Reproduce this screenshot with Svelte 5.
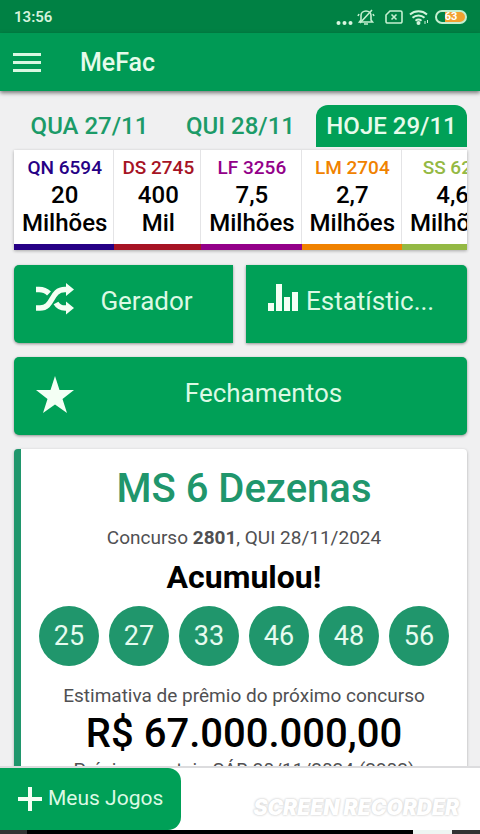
<script lang="ts">
	type Prize = { code: string; contest: string; amount: string; unit: string; color: string };

	const days = ['QUA 27/11', 'QUI 28/11', 'HOJE 29/11'];
	let selected = $state('HOJE 29/11');

	const prizes: Prize[] = [
		{ code: 'QN', contest: '6594', amount: '20', unit: 'Milhões', color: '#260085' },
		{ code: 'DS', contest: '2745', amount: '400', unit: 'Mil', color: '#a61324' },
		{ code: 'LF', contest: '3256', amount: '7,5', unit: 'Milhões', color: '#930089' },
		{ code: 'LM', contest: '2704', amount: '2,7', unit: 'Milhões', color: '#f08200' },
		{ code: 'SS', contest: '622', amount: '4,6', unit: 'Milhões', color: '#94b944' }
	];

	const numbers = [25, 27, 33, 46, 48, 56];
</script>

<div class="screen">
	<div class="status">
		<span>13:56</span>
		<div class="status-icons">
			<svg width="17" height="16" viewBox="0 0 17 16" fill="#d8f5df">
				<circle cx="2.5" cy="12" r="2" />
				<circle cx="8.5" cy="12" r="2" />
				<circle cx="14.5" cy="12" r="2" />
			</svg>
			<svg class="bell" width="18" height="16" viewBox="0 0 18 16" fill="none" stroke="#c4efd0" stroke-width="1.6">
				<path d="M4 11V6.500C4 4 6 2 9 2s5 2 5 4.500V11l1.500 2h-13L4 11z" />
				<path d="M7 15h4M2 5l-1 2M16 5l1 2M3 14L15 1" />
			</svg>
			<svg class="sim" width="18" height="16" viewBox="0 0 18 16" fill="none" stroke="#c4efd0" stroke-width="1.6">
				<path d="M5 2h10.500a1.500 1.500 0 0 1 1.500 1.500v9a1.500 1.500 0 0 1-1.500 1.500h-13A1.500 1.500 0 0 1 1 12.500V6z" />
				<path d="M6.500 5.500l5 5M11.500 5.500l-5 5" />
			</svg>
			<svg class="wifi" width="20" height="16" viewBox="0 0 20 16" fill="none" stroke="#d2f5dc" stroke-width="2">
				<path d="M1 5.500a13 13 0 0 1 17 0M3.500 8.700a9 9 0 0 1 12 0M6.500 11.700a5 5 0 0 1 6 0" />
				<circle cx="9.500" cy="14" r="1" fill="#d2f5dc" />
				<path d="M16 12v3M18.500 11v3" stroke-width="1" />
			</svg>
			<span class="battery">63</span>
		</div>
	</div>

	<header class="appbar">
		<button class="menu" aria-label="Menu">
			<svg width="28" height="20" viewBox="0 0 28 20" fill="#d9f8e2">
				<path d="M0 0h28v3H0zM0 8h28v3H0zM0 16h28v3H0z" />
			</svg>
		</button>
		<h1>MeFac</h1>
	</header>

	<main>
		<div class="tabs" role="tablist">
			{#each days as day}
				<button role="tab" aria-selected={selected === day} class:active={selected === day} onclick={() => (selected = day)}>
					{day}
				</button>
			{/each}
		</div>

		<div class="prizes">
			{#each prizes as p}
				<div class="prize" style:--color={p.color}>
					<span class="prize-name">{p.code} {p.contest}</span>
					<span>{p.amount}</span>
					<span>{p.unit}</span>
				</div>
			{/each}
		</div>

		<div class="actions">
			<button class="action left">
				<svg width="38" height="32" viewBox="0 0 38 32" fill="none" stroke="#f4fff4" stroke-width="5.500">
					<path d="M0 6.500h3c4 0 7 1 10 4M0 25h4c14 0 10-18.500 25-18.500h3M20 20c2 3.500 5 5 9 5h3" />
					<path d="M30 0l8 6.500-8 6.500zM30 18.500l8 6.500-8 6.500z" fill="#f4fff4" stroke="none" />
				</svg>
				<span>Gerador</span>
			</button>
			<button class="action right">
				<svg width="30" height="32" viewBox="0 0 30 32" fill="#f4fff4">
					<path d="M0 20h6v8H0zM8 1h6v27H8zM16 14h6v14h-6zM24 9h6v19h-6z" />
				</svg>
				<span>Estatístic...</span>
			</button>
			<button class="action wide">
				<svg class="star" width="38" height="38" viewBox="0 0 38 38" fill="#f4fff4">
					<path d="M19 0l4.500 14H38L26.500 23 31 37l-12-8.500L7 37l4.500-14L0 14h14.500z" />
				</svg>
				<span>Fechamentos</span>
			</button>
		</div>

		<section class="card">
			<h2>MS 6 Dezenas</h2>
			<p>Concurso <b>2801</b>, QUI 28/11/2024</p>
			<p class="result">Acumulou!</p>
			<div class="balls">
				{#each numbers as n}
					<span class="ball">{n}</span>
				{/each}
			</div>
			<p>Estimativa de prêmio do próximo concurso</p>
			<p class="money">R$ 67.000.000,00</p>
			<p>Próximo sorteio SÁB 30/11/2024 (2802)</p>
		</section>
	</main>

	<footer>
		<button class="games">
			<svg width="24" height="24" viewBox="0 0 24 24" fill="#f4fff4">
				<path d="M10 0h4v10h10v4H14v10h-4V14H0v-4h10z" />
			</svg>
			<span>Meus Jogos</span>
		</button>
		<span class="watermark">SCREEN RECORDER</span>
	</footer>
	<div class="strip"><i></i><i class="thumb"></i><i></i></div>
</div>

<style>
	:global(body) {
		margin: 0;
	}

	.screen {
		display: flex;
		flex-direction: column;
		height: 100vh;
		overflow: hidden;
		background: #f0f0f1;
		font-family: Roboto, sans-serif;
		color: #000;
	}

	button {
		border: none;
		padding: 0;
		background: none;
		font: inherit;
		color: inherit;
		cursor: pointer;
	}

	h1,
	h2,
	p {
		margin: 0;
	}

	svg {
		flex: none;
	}

	.status {
		display: flex;
		flex: none;
		align-items: center;
		justify-content: space-between;
		height: 33px;
		padding: 0 13px 0 14px;
		background: #008144;
		color: #d5f3dc;
		font-size: 15px;
		font-weight: 600;
	}

	.status-icons {
		display: flex;
		align-items: center;
	}

	.status-icons svg:first-child {
		padding-top: 5px;
	}

	.bell {
		margin-left: 4px;
	}

	.sim {
		margin-left: 10px;
	}

	.wifi {
		margin: 0 6px;
	}

	.battery {
		box-sizing: border-box;
		width: 32px;
		height: 14px;
		border: 2px solid #c4efd0;
		border-radius: 7px;
		background: linear-gradient(90deg, #008144 8px, #f2a130 8px);
		color: #fff;
		font-size: 11px;
		font-weight: 700;
		line-height: 10px;
		text-align: center;
	}

	.appbar {
		display: flex;
		flex: none;
		align-items: center;
		gap: 39px;
		height: 58px;
		padding: 0 13px;
		background: #009a55;
		box-shadow: 0 2px 4px rgba(0, 0, 0, 0.5);
		color: #e6fbeb;
	}

	.menu {
		display: flex;
		padding-top: 2px;
	}

	h1 {
		font-size: 25px;
		font-weight: 500;
	}

	main {
		flex: 1;
		min-height: 0;
		overflow: hidden;
		padding: 14px 13px 0 14px;
	}

	.tabs {
		display: grid;
		grid-template-columns: repeat(3, 1fr);
	}

	.tabs button {
		height: 42px;
		border-radius: 12px 12px 0 0;
		color: #1c9b68;
		font-size: 24px;
		font-weight: 500;
		white-space: nowrap;
	}

	.tabs .active {
		background: #00a057;
		color: #e6fbeb;
	}

	.prizes {
		display: flex;
		overflow: hidden;
		margin-top: 3px;
		background: #fff;
		box-shadow: 0 1px 3px rgba(0, 0, 0, 0.3);
	}

	.prize {
		display: flex;
		flex: none;
		flex-direction: column;
		align-items: center;
		padding: 5px 7px 7px 8px;
		border-bottom: 6px solid var(--color);
		box-shadow: inset -1px 0 #e4e4e6;
		font-size: 24px;
		font-weight: 500;
		line-height: 28px;
	}

	.prize-name {
		color: var(--color);
		font-size: 19px;
		line-height: 26px;
	}

	.actions {
		display: grid;
		grid-template-columns: 219fr 221fr;
		gap: 14px 13px;
		margin: 15px 0 14px;
	}

	.action {
		display: flex;
		align-items: center;
		gap: 8px;
		min-width: 0;
		height: 78px;
		padding: 0 22px 6px;
		border-radius: 5px;
		background: #00a057;
		box-shadow: 0 1px 3px rgba(0, 0, 0, 0.4);
		color: #dcf9e4;
		font-size: 26px;
	}

	.action span {
		flex: 1;
		white-space: nowrap;
	}

	.action svg {
		margin-bottom: 4px;
	}

	.action .star {
		margin: 4px 0 0;
	}

	.left {
		border-radius: 5px 0 0 5px;
	}

	.right {
		border-radius: 0 5px 5px 0;
		text-align: left;
	}

	.wide {
		grid-column: 1 / -1;
	}

	.card {
		padding: 16px 12px;
		border-left: 7px solid #20966c;
		border-radius: 4px;
		background: #fff;
		box-shadow: 0 1px 3px rgba(0, 0, 0, 0.3);
		color: #505052;
		font-size: 19px;
		line-height: 24px;
		text-align: center;
		white-space: nowrap;
	}

	h2 {
		margin-bottom: 13px;
		color: #20966c;
		font-size: 40px;
		font-weight: 500;
		line-height: 48px;
	}

	.card .result {
		margin: 7px 0 9px;
		color: #000;
		font-size: 32px;
		font-weight: 700;
		line-height: 40px;
	}

	.balls {
		display: flex;
		justify-content: center;
		gap: 10px;
		margin-bottom: 18px;
	}

	.ball {
		width: 60px;
		height: 60px;
		border-radius: 50%;
		background: #20966c;
		color: #e6fbef;
		font-size: 27px;
		line-height: 60px;
	}

	.card .money {
		padding-top: 2px;
		color: #000;
		font-size: 40px;
		font-weight: 500;
		line-height: 48px;
	}

	footer {
		display: flex;
		flex: none;
		align-items: center;
		justify-content: space-between;
		padding-right: 21px;
		border-top: 2px solid #dcdcde;
		background: #fff;
	}

	.games {
		display: flex;
		align-items: center;
		gap: 6px;
		height: 62px;
		padding: 0 18px;
		border-radius: 0 13px 13px 0;
		background: #00a057;
		color: #dcf9e4;
		font-size: 21px;
	}

	.games span {
		padding-bottom: 2px;
	}

	.watermark {
		padding-top: 16px;
		color: #fff;
		font-family: Inter, sans-serif;
		font-size: 21px;
		font-style: italic;
		font-weight: 900;
		text-shadow: 0 0 2px #ccc, 0 0 3px #ddd;
	}

	.strip {
		display: grid;
		flex: none;
		grid-template-columns: 27fr 386fr 39fr 28fr;
		height: 4px;
		background: #000;
	}

	.strip i {
		background: #333;
	}

	.strip .thumb {
		grid-column: 3;
		background: #eef5f2;
	}
</style>
